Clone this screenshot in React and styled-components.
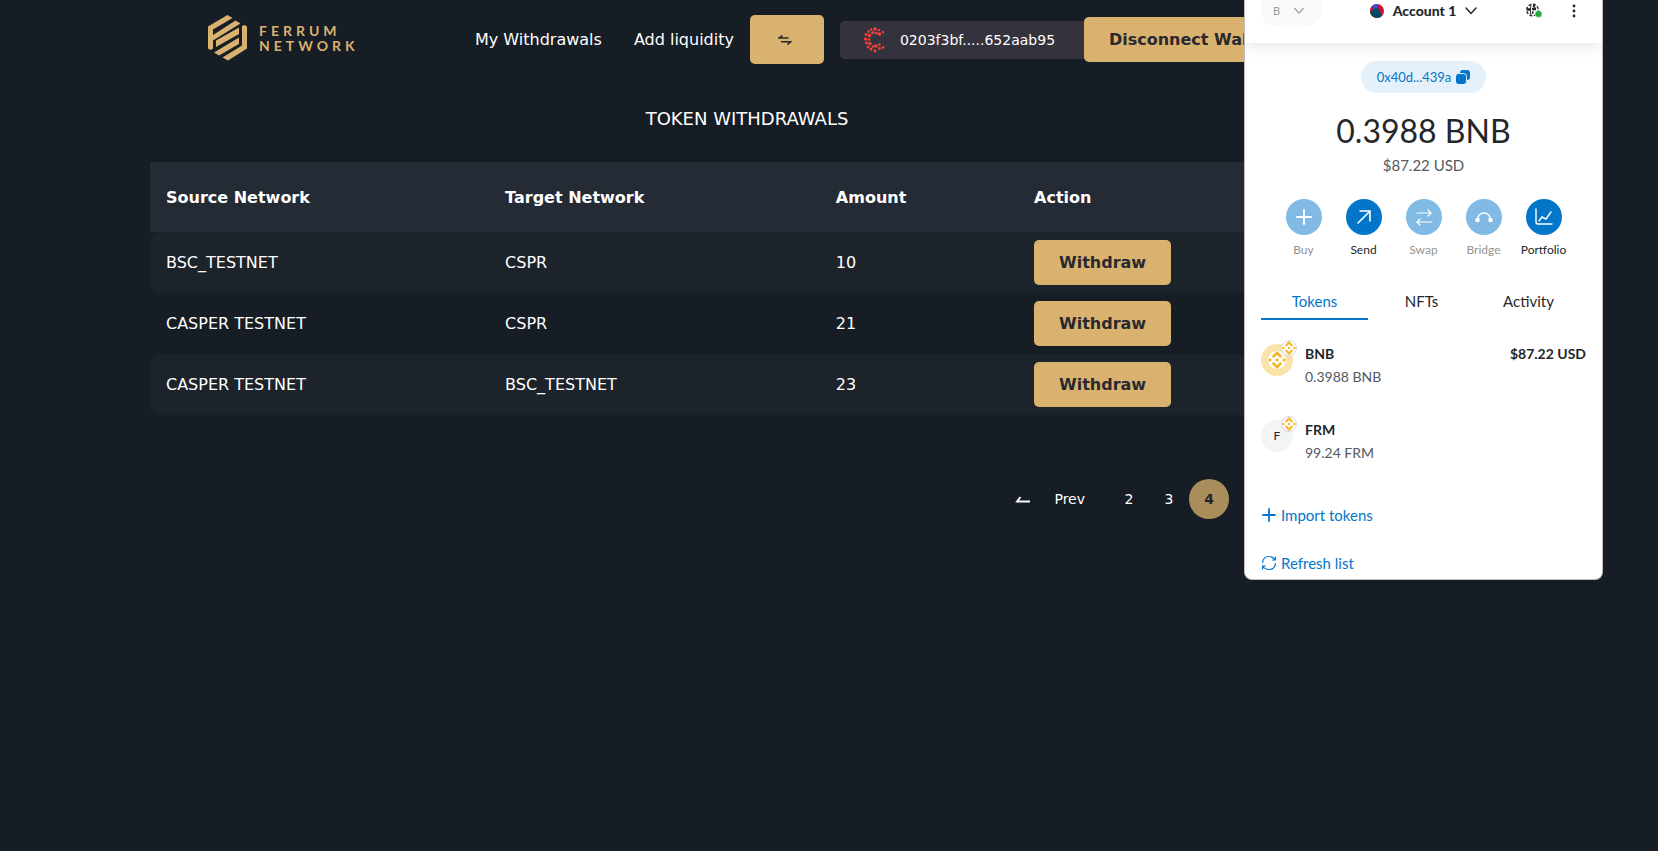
import React from "react";
import styled, { createGlobalStyle } from "styled-components";

const Global = createGlobalStyle`
  * { box-sizing: border-box; }
  body { margin: 0; background: #161d24; color: #fff; font-family: "DejaVu Sans", sans-serif; font-size: 16px; }
  button { font: inherit; color: inherit; border: 0; background: none; padding: 0; margin: 0; cursor: pointer; }
  a { color: inherit; text-decoration: none; }
  svg { display: block; flex: none; }
`;

const Page = styled.div`
  position: relative;
  min-height: 100vh;
  padding-right: 164px;
`;

const Nav = styled.header`
  display: flex;
  align-items: center;
  height: 79px;
  padding-left: 208px;
  white-space: nowrap;
`;
const Brand = styled.a`
  display: flex;
  align-items: center;
  gap: 11px;
  flex: none;
  width: 267px;
  padding-bottom: 3px;
  color: #dab26f;
`;
const Wordmark = styled.span`
  font-family: Lato, sans-serif;
  font-size: 14px;
  font-weight: 700;
  line-height: 15px;
  letter-spacing: 4px;
`;
const Links = styled.nav`
  display: flex;
  gap: 32px;
  margin-right: 16px;
`;
const GoldButton = styled.button`
  display: flex;
  align-items: center;
  justify-content: center;
  flex: none;
  height: ${(p) => p.$height || 45}px;
  padding: 0 25px;
  border-radius: 5px;
  background: #dab26f;
  color: #28292f;
  font-weight: 700;
`;
const SwitchButton = styled(GoldButton)`
  justify-content: flex-start;
  width: 74px;
  padding: 0 28px;
  margin-right: 16px;
`;
const AccountChip = styled.div`
  display: flex;
  align-items: center;
  flex: none;
  gap: 14px;
  width: 244px;
  height: 38px;
  padding-left: 24px;
  border-radius: 5px 0 0 5px;
  background: #34333d;
  font-size: 14px;
`;

const Main = styled.main`
  padding: 0 150px;
`;
const Title = styled.h1`
  margin: 0;
  padding: 29px 0 32px;
  font-size: 18px;
  line-height: 22px;
  font-weight: 400;
  text-align: center;
`;
const Table = styled.table`
  width: 100%;
  table-layout: fixed;
  border-collapse: separate;
  border-spacing: 0;
  text-align: left;
`;
const Th = styled.th`
  width: ${(p) => p.$width};
  height: 70px;
  padding: 0 16px;
  background: #252b35;
  font-weight: 700;
`;
const Row = styled.tr`
  background: ${(p) => (p.$shaded ? "#1d232a" : "transparent")};
  td:first-child { border-radius: 10px 0 0 10px; }
  td:last-child { border-radius: 0 10px 10px 0; }
`;
const Td = styled.td`
  padding: 8px 16px;
  background: inherit;
`;
const Pager = styled.nav`
  display: flex;
  align-items: center;
  justify-content: flex-end;
  margin-top: 64px;
  padding-right: 115px;
  font-size: 14px;
`;
const PrevButton = styled.button`
  display: flex;
  align-items: center;
  gap: 24px;
  margin-right: 24px;
`;
const PageButton = styled.button`
  width: 40px;
  height: 40px;
  border-radius: 50%;
  background: ${(p) => (p.$current ? "#a98d5b" : "transparent")};
  color: ${(p) => (p.$current ? "#20242a" : "#fff")};
  font-weight: ${(p) => (p.$current ? 700 : 400)};
`;

const Wallet = styled.aside`
  position: absolute;
  top: 0;
  right: 55px;
  width: 359px;
  overflow: hidden;
  border: 1px solid #bdbdbd;
  border-top: 0;
  border-radius: 0 0 8px 8px;
  background: #fff;
  color: #24272a;
  font-family: Lato, sans-serif;
  font-size: 14px;
  line-height: 22px;
`;
const WalletHeader = styled.header`
  display: grid;
  grid-template-columns: 60px 1fr 60px;
  align-items: start;
  height: 43px;
  padding: 0 16px;
  box-shadow: 0 2px 16px rgba(0, 0, 0, 0.12);
`;
const NetworkButton = styled.button`
  display: flex;
  align-items: center;
  justify-content: flex-start;
  gap: 14px;
  height: 27px;
  padding: 0 0 5px 12px;
  border-radius: 0 0 16px 16px;
  background: #f8f9fb;
  color: #9a9c9e;
  font-size: 11px;
`;
const AccountButton = styled.button`
  display: flex;
  align-items: center;
  justify-content: center;
  gap: 9px;
  height: 22px;
  font-size: 14px;
  font-weight: 900;
`;
const HeaderTools = styled.div`
  display: flex;
  align-items: center;
  justify-content: space-between;
  height: 22px;
  padding-right: 10px;
`;
const Summary = styled.section`
  display: flex;
  flex-direction: column;
  align-items: center;
  padding: 18px 8px 0;
`;
const AddressButton = styled.button`
  display: flex;
  align-items: center;
  justify-content: center;
  gap: 5px;
  width: 125px;
  height: 32px;
  border-radius: 16px;
  background: #e5f1fa;
  color: #0376c9;
  font-size: 13px;
`;
const Balance = styled.div`
  margin-top: 18px;
  font-size: 32px;
  line-height: 40px;
`;
const Fiat = styled.div`
  margin-top: 2px;
  font-size: 15px;
  line-height: 24px;
  color: #535a61;
`;
const Actions = styled.div`
  display: flex;
  margin: 22px 0 0;
`;
const ActionButton = styled.button`
  display: flex;
  flex-direction: column;
  align-items: center;
  gap: 5px;
  width: 60px;
  color: ${(p) => (p.disabled ? "#939495" : "#24272a")};
  font-size: 12px;
  line-height: 20px;
`;
const ActionDisc = styled.span`
  display: flex;
  align-items: center;
  justify-content: center;
  width: 36px;
  height: 36px;
  border-radius: 50%;
  background: ${(p) => (p.$faded ? "#81bae4" : "#0376c9")};
`;
const Tabs = styled.div`
  display: grid;
  grid-template-columns: repeat(3, 107px);
  margin: 26px 16px 0;
`;
const Tab = styled.button`
  height: 34px;
  padding-bottom: 2px;
  border-bottom: 2px solid ${(p) => (p["aria-selected"] ? "#0376c9" : "transparent")};
  color: ${(p) => (p["aria-selected"] ? "#0376c9" : "#24272a")};
  font-size: 15px;
`;
const TokenList = styled.ul`
  margin: 0;
  padding: 8px 16px 0;
  list-style: none;
`;
const TokenItem = styled.li`
  display: flex;
  gap: 12px;
  height: 76px;
  padding-top: 16px;
`;
const TokenMark = styled.span`
  position: relative;
  display: flex;
  align-items: center;
  justify-content: center;
  width: 32px;
  height: 32px;
  border-radius: 50%;
  background: ${(p) => (p.$gold ? "#fae2a8" : "#f2f4f6")};
  font-size: 12px;
`;
const Badge = styled.span`
  position: absolute;
  top: -4px;
  right: -4px;
  display: flex;
  align-items: center;
  justify-content: center;
  width: 16px;
  height: 16px;
  border: 1px solid #d6d9dc;
  border-radius: 50%;
  background: #fff;
`;
const TokenText = styled.span`
  flex: 1;
`;
const Strong = styled.strong`
  display: block;
  height: 22px;
  line-height: 20px;
  font-weight: 700;
`;
const Muted = styled.span`
  color: #535a61;
`;
const FooterLinks = styled.div`
  display: flex;
  flex-direction: column;
  align-items: flex-start;
  gap: 26px;
  padding: 24px 16px 5px;
`;
const LinkButton = styled.button`
  display: flex;
  align-items: center;
  gap: 4px;
  height: 22px;
  color: #0376c9;
  font-size: 15px;
`;

const FerrumMark = () => (
  <svg width="40" height="46" viewBox="0 0 40 46" fill="#dab26f" aria-hidden="true">
    <path d="M0 11.500 19.500 0l5 3L5 14.500v5.500L27.500 5.500l5 3L5 25.500v8l-2.500 1.500L0 33.500z" />
    <path d="M8 25.500 31 12.500v6.500L8 32zM6 37.500 31 22.500V29L11 40.500zM34 11l2.500-1L39 11.500v22L20 45.500l-5.500-3L34 30.500z" />
  </svg>
);

const SwapIcon = () => (
  <svg width="14" height="10" viewBox="0 0 14 10" fill="none" stroke="#28292f" strokeWidth="1.6">
    <path d="M10.500 3H1l3.500-2.500M3 6.800h9.500L9.500 9.500M1 3h9.500M12.500 6.800H3" />
  </svg>
);

const CASPER_DOTS = [
  [11, 2, 1.8], [7, 2.500, 1.2], [15, 3, 1.3], [19, 5, 1.2], [4.500, 4.500, 1.3], [8.500, 5.500, 1.5], [12, 6, 1.5], [15.500, 7, 1.8],
  [2, 7.500, 1.4], [5.500, 8.500, 1.8], [1.500, 12, 1.6], [5, 12.500, 1.3], [2.500, 16, 1.4], [6, 16.500, 1.7], [4, 20, 1.4],
  [9, 19.500, 1.3], [7, 22, 1.5], [12, 19, 1.8], [11, 24, 1.4], [15.500, 21.500, 1.4], [15.500, 17.500, 1.2], [19, 20.500, 1.3],
];
const CasperIcon = () => (
  <svg width="22" height="26" viewBox="0 0 22 26" fill="#f4433c" aria-hidden="true">
    {CASPER_DOTS.map(([x, y, r]) => <circle key={`${x}-${y}`} cx={x} cy={y} r={r} />)}
  </svg>
);

const PrevArrow = () => (
  <svg width="15" height="8" viewBox="0 0 15 8" fill="none" stroke="#fff" strokeWidth="1.800">
    <path d="M15 6.500H2L5.500 2" />
  </svg>
);

const Chevron = ({ width }) => (
  <svg width={width} height="8" viewBox="0 0 12 8" fill="none" stroke="currentColor" strokeWidth="1.500" strokeLinecap="round">
    <path d="m1 1 5 5.500L11 1" />
  </svg>
);

const Avatar = () => (
  <svg width="14" height="14" viewBox="0 0 14 14">
    <clipPath id="avatar"><circle cx="7" cy="7" r="7" /></clipPath>
    <g clipPath="url(#avatar)">
      <path fill="#c8143c" d="M0 0h14v14H0z" />
      <path fill="#2755dd" d="M1 0h7l-1 5-5 1z" />
      <path fill="#c8143c" d="M0 0h2l1 5-3 3z" />
      <path fill="#03495d" d="m0 8 4-3 4-1 5 10H0z" />
    </g>
  </svg>
);

const GlobeIcon = () => (
  <svg width="16" height="16" viewBox="0 0 16 16" fill="none" stroke="#24272a">
    <circle cx="6.500" cy="7" r="5.800" strokeWidth="1.300" strokeDasharray="3 1.500" />
    <path strokeWidth="2.400" d="M1 6.500h3.500M6 6h4M6 9.500h1.500M7 3h2" />
    <path strokeWidth="1" d="M5 2Q3.500 7 5 12M8 2q1.500 3 1 5" />
    <circle cx="12.500" cy="11" r="3.500" fill="#28a745" stroke="#fff" strokeWidth=".5" />
  </svg>
);

const MenuIcon = () => (
  <svg width="4" height="14" viewBox="0 0 4 14" fill="#24272a">
    <circle cx="2" cy="2" r="1.400" /><circle cx="2" cy="7" r="1.400" /><circle cx="2" cy="12" r="1.400" />
  </svg>
);

const CopyIcon = () => (
  <svg width="14" height="14" viewBox="0 0 14 14" fill="#0376c9">
    <rect x="4" y="0" width="10" height="10" rx="3" />
    <rect x="-.5" y="3.500" width="11" height="11" rx="3" stroke="#e5f1fa" />
  </svg>
);

const BNB_PATH =
  "m9 0 5.300 5.300-2 2L9 4 5.700 7.300l-2-2zM2 7l2 2-2 2-2-2zM9 7l2 2-2 2-2-2zM16 7l2 2-2 2-2-2zM5.700 10.700 9 14l3.300-3.300 2 2L9 18l-5.300-5.300z";

const BnbIcon = () => (
  <svg width="14" height="14" viewBox="0 0 18 18">
    <path fill="#f3ba2f" d={BNB_PATH} />
  </svg>
);

const BnbDisc = () => (
  <svg width="18" height="18" viewBox="0 0 18 18">
    <circle cx="9" cy="9" r="9" fill="#fff" />
    <path fill="#f3ba2f" d={BNB_PATH} />
  </svg>
);

const ACTION_PATHS = {
  Buy: <path d="M10 3v14M3 10h14" strokeWidth="2" />,
  Send: <path d="M4 16 15.500 4.500M6 4h10v10" strokeWidth="1.600" />,
  Swap: <path d="M3 6h14l-3-3M17 6l-3 3M18 15H3l3-3M3 15l3 3" strokeWidth="1.200" />,
  Bridge: <><path d="M3.500 12Q5 6 10 6t6.500 6" /><circle cx="3.500" cy="13" r="1.500" fill="#fff" /><circle cx="16.500" cy="13" r="1.500" fill="#fff" /></>,
  Portfolio: <path d="M2 2v13q0 2 2 2h14M5 14l3-4 4 2 5-7" strokeWidth="1.400" />,
};
const ActionIcon = ({ name }) => (
  <svg width="20" height="20" viewBox="0 0 20 20" fill="none" stroke="#fff" strokeWidth="1.500" strokeLinecap="round">
    {ACTION_PATHS[name]}
  </svg>
);

const PlusIcon = () => (
  <svg width="16" height="16" viewBox="0 0 16 16" stroke="#0376c9" strokeWidth="1.800" strokeLinecap="round">
    <path d="M8 2v12M2 8h12" />
  </svg>
);
const RefreshIcon = () => (
  <svg width="16" height="16" viewBox="0 0 16 16" fill="none" stroke="#0376c9" strokeWidth="1.200">
    <path d="M14.500 1.500V5H11M14.500 5Q12 1.500 8 1.500 2 1.500 1.500 8M1.500 14.500V11H5M1.500 11q2.500 3.500 6.500 3.500 6 0 6.500-6.500" />
  </svg>
);

const WITHDRAWALS = [
  ["BSC_TESTNET", "CSPR", 10],
  ["CASPER TESTNET", "CSPR", 21],
  ["CASPER TESTNET", "BSC_TESTNET", 23],
];
const ACTIONS = [["Buy", true], ["Send", false], ["Swap", true], ["Bridge", true], ["Portfolio", false]];

export default function App() {
  return (
    <>
      <Global />
      <Page>
        <Nav>
          <Brand href="#">
            <FerrumMark />
            <Wordmark>FERRUM<br />NETWORK</Wordmark>
          </Brand>
          <Links>
            <a href="#withdrawals">My Withdrawals</a>
            <a href="#liquidity">Add liquidity</a>
          </Links>
          <SwitchButton $height={49} aria-label="Switch"><SwapIcon /></SwitchButton>
          <AccountChip><CasperIcon />0203f3bf.....652aab95</AccountChip>
          <GoldButton>Disconnect Wallet</GoldButton>
        </Nav>

        <Main>
          <Title>TOKEN WITHDRAWALS</Title>
          <Table>
            <thead>
              <tr>
                <Th $width="28.4%">Source Network</Th>
                <Th $width="27.7%">Target Network</Th>
                <Th $width="16.6%">Amount</Th>
                <Th>Action</Th>
              </tr>
            </thead>
            <tbody>
              {WITHDRAWALS.map(([source, target, amount], i) => (
                <Row key={amount} $shaded={i % 2 === 0}>
                  <Td>{source}</Td>
                  <Td>{target}</Td>
                  <Td>{amount}</Td>
                  <Td><GoldButton>Withdraw</GoldButton></Td>
                </Row>
              ))}
            </tbody>
          </Table>
          <Pager aria-label="Pages">
            <PrevButton><PrevArrow />Prev</PrevButton>
            <PageButton>2</PageButton>
            <PageButton>3</PageButton>
            <PageButton $current aria-current="page">4</PageButton>
          </Pager>
        </Main>

        <Wallet>
          <WalletHeader>
            <NetworkButton>B<Chevron width="10" /></NetworkButton>
            <AccountButton><Avatar />Account 1<Chevron width="12" /></AccountButton>
            <HeaderTools><GlobeIcon /><MenuIcon /></HeaderTools>
          </WalletHeader>
          <Summary>
            <AddressButton>0x40d...439a<CopyIcon /></AddressButton>
            <Balance>0.3988 BNB</Balance>
            <Fiat>$87.22 USD</Fiat>
            <Actions>
              {ACTIONS.map(([name, disabled]) => (
                <ActionButton key={name} disabled={disabled}>
                  <ActionDisc $faded={disabled}><ActionIcon name={name} /></ActionDisc>
                  {name}
                </ActionButton>
              ))}
            </Actions>
          </Summary>
          <Tabs role="tablist">
            <Tab role="tab" aria-selected={true}>Tokens</Tab>
            <Tab role="tab" aria-selected={false}>NFTs</Tab>
            <Tab role="tab" aria-selected={false}>Activity</Tab>
          </Tabs>
          <TokenList>
            <TokenItem>
              <TokenMark $gold><BnbDisc /><Badge><BnbIcon /></Badge></TokenMark>
              <TokenText><Strong>BNB</Strong><Muted>0.3988 BNB</Muted></TokenText>
              <Strong>$87.22 USD</Strong>
            </TokenItem>
            <TokenItem>
              <TokenMark>F<Badge><BnbIcon /></Badge></TokenMark>
              <TokenText><Strong>FRM</Strong><Muted>99.24 FRM</Muted></TokenText>
            </TokenItem>
          </TokenList>
          <FooterLinks>
            <LinkButton><PlusIcon />Import tokens</LinkButton>
            <LinkButton><RefreshIcon />Refresh list</LinkButton>
          </FooterLinks>
        </Wallet>
      </Page>
    </>
  );
}
